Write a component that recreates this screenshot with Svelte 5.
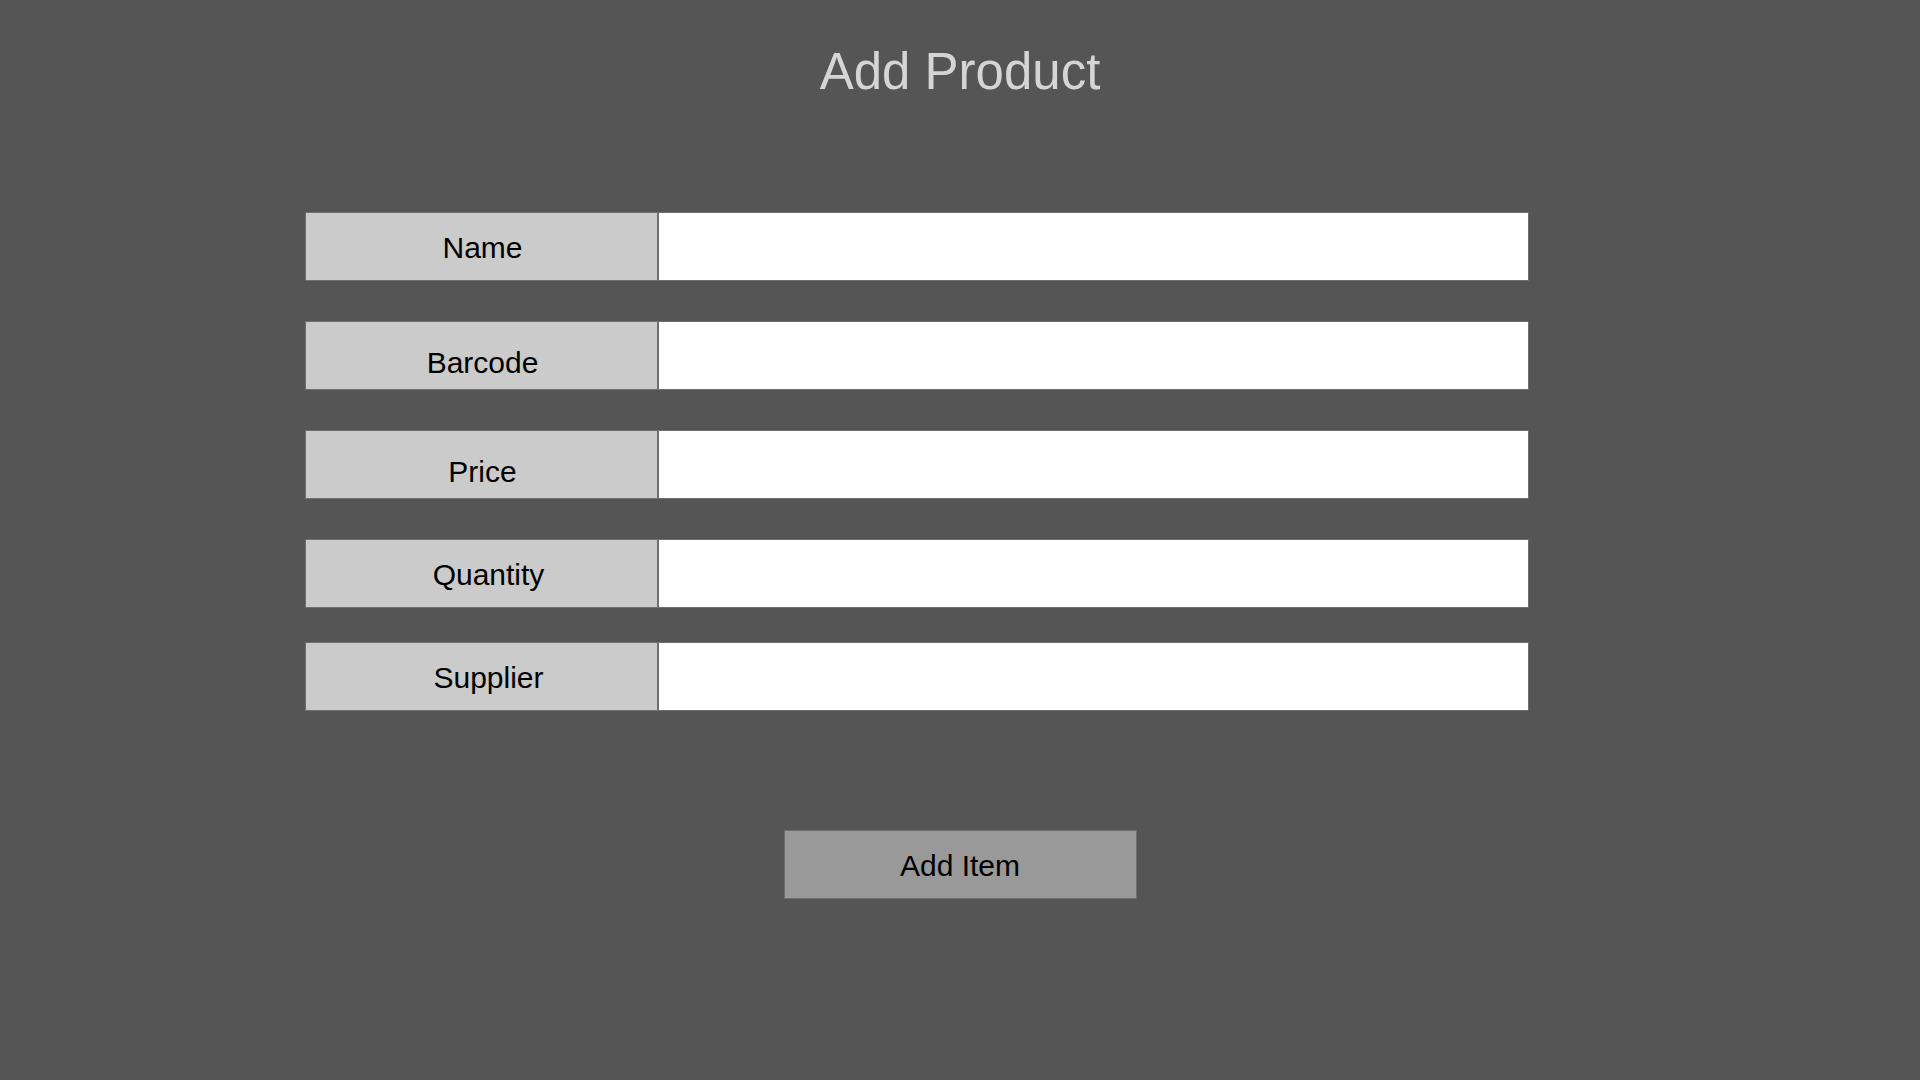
<script>
  const fields = $state([
    { id: 'name', label: 'Name', place: '', value: '' },
    { id: 'barcode', label: 'Barcode', place: 'low', value: '' },
    { id: 'price', label: 'Price', place: 'low', value: '' },
    { id: 'quantity', label: 'Quantity', place: 'inset', value: '' },
    { id: 'supplier', label: 'Supplier', place: 'inset', value: '' }
  ]);

  function submit(event) {
    event.preventDefault();
  }
</script>

<main>
  <h1>Add Product</h1>
  <form onsubmit={submit} autocomplete="off">
    <div class="fields">
      {#each fields as field (field.id)}
        <div class="row">
          <label class={field.place} for={field.id}>{field.label}</label>
          <input id={field.id} type="text" bind:value={field.value} />
        </div>
      {/each}
    </div>
    <button type="submit">Add Item</button>
  </form>
</main>

<style>
  :global(body) {
    margin: 0;
    background: #555555;
  }

  main {
    box-sizing: border-box;
    min-height: 100vh;
    padding: 42px 0;
    font-family: "Liberation Sans", Arial, Helvetica, sans-serif;
  }

  h1 {
    margin: 0 0 110px;
    font-size: 51px;
    line-height: 60px;
    font-weight: 400;
    text-align: center;
    color: #d5d5d5;
  }

  form {
    display: flex;
    flex-direction: column;
    align-items: center;
    gap: 119px;
  }

  .fields {
    box-sizing: border-box;
    width: 100%;
    display: grid;
    grid-template-columns: 305fr 1224fr 391fr;
    row-gap: 40px;
  }

  .row {
    grid-column: 2;
    display: grid;
    grid-template-columns: 353fr 871fr;
  }

  .row:last-child {
    margin-top: -6px;
  }

  label,
  input,
  button {
    box-sizing: border-box;
    height: 69px;
    border: 1px solid #6f6f6f;
    border-radius: 0;
    font-family: inherit;
    font-size: 30px;
    line-height: 36px;
    color: #000000;
  }

  label {
    display: flex;
    align-items: center;
    justify-content: center;
    padding: 2px 0 0 2px;
    background: #cbcbcb;
  }

  .low {
    padding-top: 14px;
  }

  .inset {
    padding-left: 14px;
  }

  input {
    width: 100%;
    min-width: 0;
    margin: 0;
    padding: 0 20px;
    background: #ffffff;
  }

  button {
    width: 353px;
    max-width: 100%;
    padding: 2px 0 0;
    background: #999999;
    cursor: pointer;
  }
</style>
